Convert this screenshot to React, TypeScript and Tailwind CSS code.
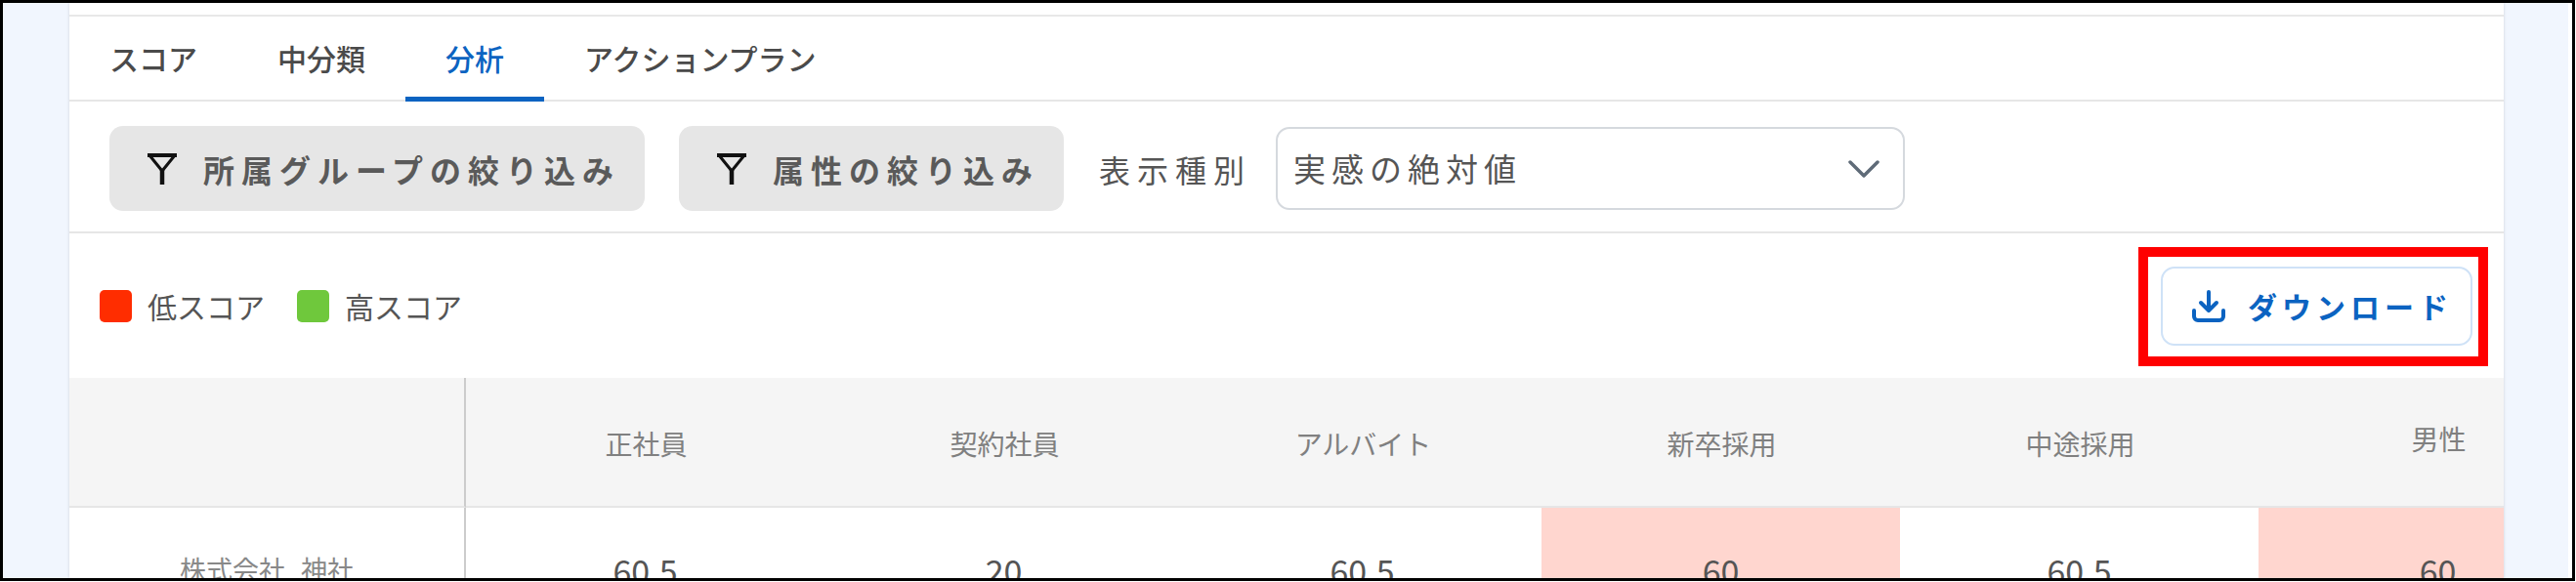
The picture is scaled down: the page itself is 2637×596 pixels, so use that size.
const FONT = "font-['Noto_Sans_CJK_JP','Noto_Sans',sans-serif]";

const tabs = ["スコア", "中分類", "分析", "アクションプラン"];

const columns = [
  { label: "正社員", value: "60.5", low: false },
  { label: "契約社員", value: "20", low: false },
  { label: "アルバイト", value: "60.5", low: false },
  { label: "新卒採用", value: "60", low: true },
  { label: "中途採用", value: "60.5", low: false },
  { label: "男性", value: "60", low: true },
];

function FilterIcon() {
  return (
    <svg width="32" height="34" viewBox="0 0 32 34" fill="none" stroke="#111" className="shrink-0">
      <path d="M1 3H31" strokeWidth="4" />
      <path d="M3 3L16 19L29 3" strokeWidth="3" />
      <path d="M16 18V33" strokeWidth="4.5" />
    </svg>
  );
}

function DownloadIcon() {
  return (
    <svg width="34" height="33" viewBox="0 0 34 33" fill="none" stroke="#0b63c1" strokeWidth="4" strokeLinecap="round" strokeLinejoin="round" className="shrink-0">
      <path d="M17 2V20" />
      <path d="M9 13L17 21L25 13" />
      <path d="M2 21V27A4 4 0 0 0 6 31H28A4 4 0 0 0 32 27V21" />
    </svg>
  );
}

function FilterButton({ label, width }: { label: string; width: string }) {
  return (
    <button
      type="button"
      className={`flex h-[87px] items-center gap-[26px] rounded-[14px] bg-[#e6e6e6] pl-[38px] text-[32px] font-bold tracking-[7px] text-[#5a5a5a] ${width}`}
    >
      <FilterIcon />
      <span>{label}</span>
    </button>
  );
}

function LegendItem({ color, label }: { color: string; label: string }) {
  return (
    <div className="flex items-center gap-[16px]">
      <span className={`h-[33px] w-[33px] rounded-[5px] ${color}`} />
      <span className="text-[30px] text-[#555]">{label}</span>
    </div>
  );
}

export default function App() {
  return (
    <div className={`relative h-[596px] w-[2637px] overflow-hidden bg-white pb-px pr-px ${FONT}`}>
      <div className="h-full border-[3px] border-black pr-[4px]">
        <div className="flex h-full bg-[#f1f6fe] pl-[68px]">
          <main className="flex h-full w-[2492px] shrink-0 flex-col overflow-hidden bg-white shadow-[0_0_3px_rgba(0,0,0,0.15)]">
            <div className="h-[14px] shrink-0 border-b-2 border-[#e8e8e8]" />

            <nav className="flex h-[87px] shrink-0 border-b-2 border-[#e6e6e6]">
              {tabs.map((tab, i) => (
                <div
                  key={tab}
                  className={`-mb-[2px] flex items-center border-b-[5px] px-[41px] pt-[2px] text-[30px] font-medium ${
                    i === 2 ? "border-[#0b63c1] text-[#0b63c1]" : "border-transparent text-[#4a4a4a]"
                  }`}
                >
                  {tab}
                </div>
              ))}
            </nav>

            <div className="flex h-[135px] shrink-0 items-center border-b-2 border-[#e6e6e6] pl-[41px] pt-[4px]">
              <FilterButton label="所属グループの絞り込み" width="w-[548px]" />
              <div className="ml-[35px]">
                <FilterButton label="属性の絞り込み" width="w-[394px]" />
              </div>
              <span className="ml-[36px] text-[32px] tracking-[7px] text-[#555]">表示種別</span>
              <div className="ml-[25px] flex h-[85px] w-[644px] items-center justify-between rounded-[14px] border-2 border-[#d5d9de] pl-[16px] pr-[24px]">
                <span className="text-[33px] tracking-[6px] text-[#555]">実感の絶対値</span>
                <svg width="32" height="20" viewBox="0 0 32 20" fill="none" stroke="#5f6b78" strokeWidth="3.5" strokeLinecap="round" strokeLinejoin="round">
                  <path d="M2 3L16 17L30 3" />
                </svg>
              </div>
            </div>

            <div className="flex h-[148px] shrink-0 items-center justify-between pl-[31px] pr-[32px]">
              <div className="flex items-center gap-[33px]">
                <LegendItem color="bg-[#ff2d00]" label="低スコア" />
                <LegendItem color="bg-[#6fc83c]" label="高スコア" />
              </div>
              <button
                type="button"
                className="flex h-[81px] w-[319px] items-center gap-[23px] rounded-[14px] border-2 border-[#cfe2f7] pl-[30px] text-[30px] font-bold tracking-[5px] text-[#0b63c1]"
              >
                <DownloadIcon />
                <span>ダウンロード</span>
              </button>
            </div>

            <div className="grid shrink-0 grid-cols-[406px_repeat(6,367px)]">
              <div className="h-[133px] border-b-2 border-r-2 border-b-[#e6e6e6] border-r-[#ccc] bg-[#f5f5f5]" />
              {columns.map((col, i) => (
                <div
                  key={col.label}
                  className={`flex h-[133px] items-center justify-center border-b-2 border-[#e6e6e6] bg-[#f5f5f5] pl-[2px] text-[28px] text-[#808080] ${
                    i === 5 ? "pb-[8px]" : "pt-[2px]"
                  }`}
                >
                  {col.label}
                </div>
              ))}
              <div className="flex h-[127px] items-center justify-center border-r-2 border-[#ccc] text-[27px] text-[#888] [word-spacing:10px]">
                株式会社 神社
              </div>
              {columns.map((col) => (
                <div
                  key={col.label}
                  className={`flex h-[127px] items-center justify-center text-[34px] text-[#555] ${
                    col.low ? "bg-[#ffd6cf]" : ""
                  }`}
                >
                  {col.value}
                </div>
              ))}
            </div>
          </main>
        </div>
      </div>

      {/* annotation frame round the download button */}
      <div className="absolute left-[2189px] top-[253px] h-[122px] w-[358px] border-[10px] border-[#ff0000]" />
    </div>
  );
}
